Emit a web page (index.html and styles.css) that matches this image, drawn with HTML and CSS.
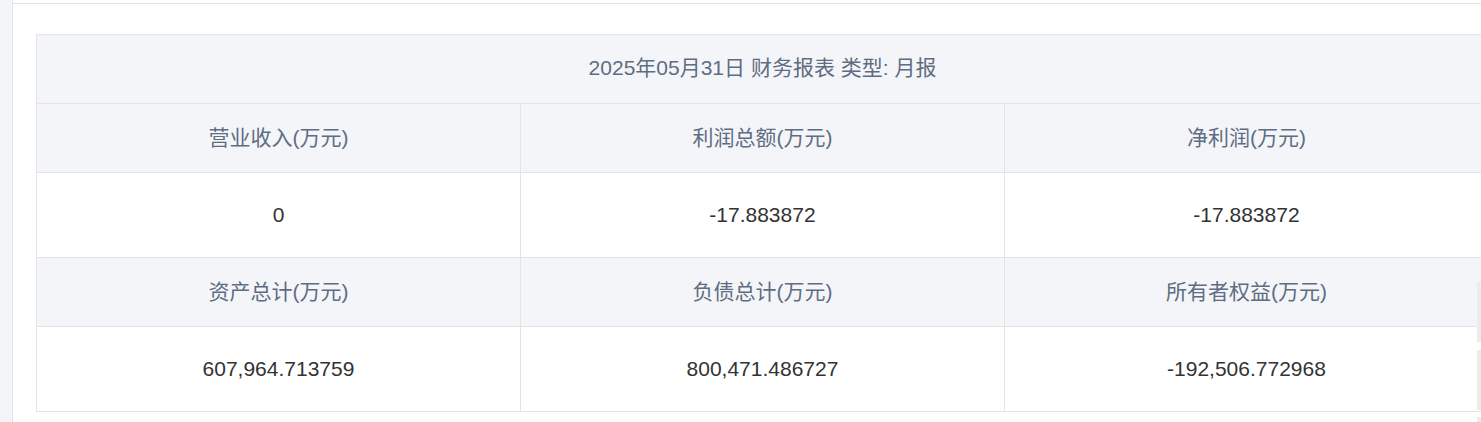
FILE: index.html
```html
<!doctype html>
<html lang="zh-CN">
    <head>
        <meta charset="UTF-8" />
        <meta name="viewport" content="width=device-width, initial-scale=1.0" />
        <title>财务报表</title>
        <link rel="stylesheet" href="styles.css">
    </head>
    <body>
        <div class="layout">
            <div class="sidebar"></div>
            <div class="main">
                <div class="panel">
                    <table class="report">
                        <tr>
                            <th colspan="3" class="title">2025年05月31日 财务报表 类型: 月报</th>
                        </tr>
                        <tr>
                            <th>营业收入(万元)</th>
                            <th>利润总额(万元)</th>
                            <th>净利润(万元)</th>
                        </tr>
                        <tr>
                            <td>0</td>
                            <td>-17.883872</td>
                            <td>-17.883872</td>
                        </tr>
                        <tr>
                            <th>资产总计(万元)</th>
                            <th>负债总计(万元)</th>
                            <th>所有者权益(万元)</th>
                        </tr>
                        <tr>
                            <td>607,964.713759</td>
                            <td>800,471.486727</td>
                            <td>-192,506.772968</td>
                        </tr>
                    </table>
                </div>
            </div>
        </div>

        <div class="rail">
            <span class="rail-item rail-a"></span>
            <span class="rail-item rail-b"></span>
            <span class="rail-item rail-c"></span>
        </div>
    </body>
</html>
```

FILE: styles.css
```css
html,
body {
    margin: 0;
    padding: 0;
    height: 100%;
    overflow: hidden;
    background: #fff;
    font-family: "Liberation Sans", "Noto Sans CJK SC", sans-serif;
}
.layout {
    display: flex;
    height: 100%;
    overflow: hidden;
}
.sidebar {
    width: 12px;
    flex-shrink: 0;
    background-color: #f4f5f9;
    border-right: 1px solid #e4e4e4;
}
.main {
    flex: 1;
    min-width: 0;
    padding-top: 3px;
    overflow: hidden;
}
.panel {
    border-top: 1px solid #e4e4e4;
    padding: 30px 0 0 23px;
}
.report {
    border-collapse: collapse;
    table-layout: fixed;
    width: 1453px;
    font-size: 21px;
    line-height: 24px;
}
.report th,
.report td {
    border: 1px solid #e4e4e4;
    text-align: center;
    padding: 0;
    width: 484px;
}
.report th {
    background-color: #f4f5f9;
    color: #5e6d82;
    font-weight: normal;
    height: 68px;
}
.report .title {
    height: 66px;
    padding-bottom: 2px;
}
.report td {
    color: #333;
    height: 84px;
}
.rail {
    position: absolute;
    top: 282px;
    right: 0;
    width: 4px;
}
.rail-item {
    display: block;
    background-color: #ececec;
    margin-bottom: 8px;
}
.rail-a {
    height: 60px;
}
.rail-b {
    height: 60px;
}
.rail-c {
    height: 20px;
    margin-top: -1px;
}
```
